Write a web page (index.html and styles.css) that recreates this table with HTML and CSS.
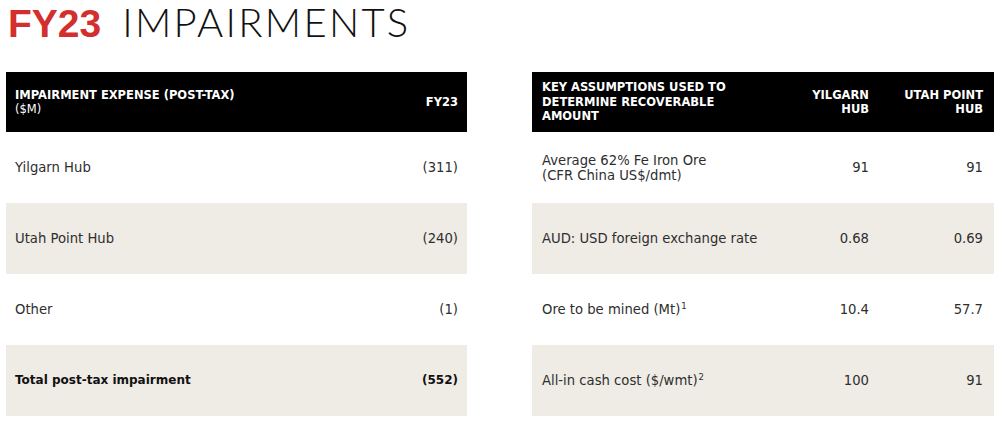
FILE: index.html
```html
<!DOCTYPE html>
<html>
<head>
<meta charset="utf-8">
<link rel="stylesheet" href="styles.css">
</head>
<body>
<h1 class="title"><span class="fy">FY23</span><span class="rest">IMPAIRMENTS</span></h1>
<div class="tables">
  <table class="tbl left">
    <thead>
      <tr>
        <th class="lab"><b>IMPAIRMENT EXPENSE (POST-TAX)</b><br><span class="unit">($M)</span></th>
        <th class="num">FY23</th>
      </tr>
    </thead>
    <tbody>
      <tr><td class="lab">Yilgarn Hub</td><td class="num">(311)</td></tr>
      <tr class="alt"><td class="lab">Utah Point Hub</td><td class="num">(240)</td></tr>
      <tr><td class="lab">Other</td><td class="num">(1)</td></tr>
      <tr class="alt total"><td class="lab">Total post-tax impairment</td><td class="num">(552)</td></tr>
    </tbody>
  </table>
  <table class="tbl right">
    <thead>
      <tr>
        <th class="lab">KEY ASSUMPTIONS USED TO<br>DETERMINE RECOVERABLE<br>AMOUNT</th>
        <th class="num c1">YILGARN<br>HUB</th>
        <th class="num c2">UTAH POINT<br>HUB</th>
      </tr>
    </thead>
    <tbody>
      <tr><td class="lab">Average 62% Fe Iron Ore<br>(CFR China US$/dmt)</td><td class="num c1">91</td><td class="num c2">91</td></tr>
      <tr class="alt"><td class="lab">AUD: USD foreign exchange rate</td><td class="num c1">0.68</td><td class="num c2">0.69</td></tr>
      <tr><td class="lab">Ore to be mined (Mt)<sup>1</sup></td><td class="num c1">10.4</td><td class="num c2">57.7</td></tr>
      <tr class="alt"><td class="lab">All-in cash cost ($/wmt)<sup>2</sup></td><td class="num c1">100</td><td class="num c2">91</td></tr>
    </tbody>
  </table>
</div>
</body>
</html>
```
FILE: styles.css
```css
html, body {
  margin: 0;
  padding: 0;
  background: #ffffff;
}
body {
  font-family: "DejaVu Sans", "Liberation Sans", sans-serif;
  color: #2e2e2e;
  width: 1003px;
  height: 424px;
  overflow: hidden;
}
.title {
  margin: 0;
  padding: 0 0 0 8px;
  height: 72px;
  font-size: 39px;
  line-height: 44px;
  font-weight: normal;
  white-space: nowrap;
}
.fy {
  font-family: "Liberation Sans", sans-serif;
  font-weight: bold;
  color: #d32f2c;
  margin-right: 21px;
}
.rest {
  font-family: "Lato", sans-serif;
  font-weight: 300;
  font-size: 40px;
  color: #111;
  letter-spacing: 2.3px;
}
.tables {
  display: flex;
  gap: 65px;
  padding-left: 6px;
}
.tbl {
  border-collapse: collapse;
  font-size: 13.2px;
}
.tbl.left { width: 461px; }
.tbl.right { width: 462px; }
.tbl th {
  background: #000;
  color: #fff;
  height: 60px;
  font-size: 11.5px;
  font-weight: bold;
  line-height: 14.5px;
  vertical-align: middle;
  padding: 0;
}
.tbl th .unit { font-weight: normal; color: #fff; }
.tbl td {
  height: 71px;
  padding: 0;
  vertical-align: middle;
  line-height: 15px;
}
.tbl tr.alt td { background: #efebe5; }
.tbl tr.total td { font-weight: bold; color: #111; font-size: 12px; }
.lab { text-align: left; padding-left: 9px !important; }
.left .num { text-align: right; padding-right: 9px !important; }
.right .lab { padding-left: 10px !important; }
.right .c1 { text-align: right; width: 110px; padding-right: 0 !important; }
.right .c2 { text-align: right; width: 114px; padding-right: 11px !important; }
sup { font-size: 8.5px; line-height: 0; vertical-align: 5px; margin-left: 1px; }
```
